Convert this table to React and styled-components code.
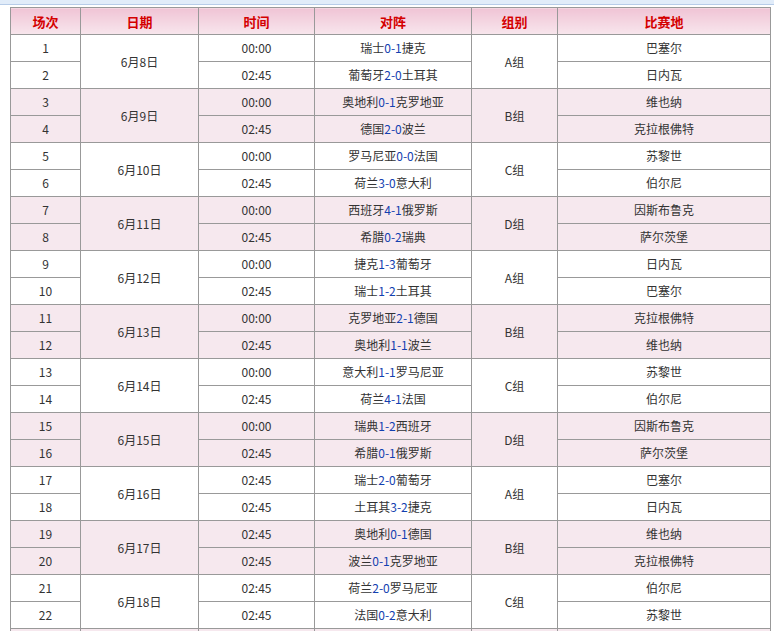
import React from 'react';
import styled, { createGlobalStyle } from 'styled-components';

const GlobalStyle = createGlobalStyle`
    body {
        margin: 0;
        background: #fff;
        font-family: "Noto Sans CJK SC", "DejaVu Sans", sans-serif;
    }
`;

const TopBar = styled.div`
    height: 4px;
    background: #e1ecf9;
    border-bottom: 1px solid #b7cce8;
`;

const Wrapper = styled.div`
    padding: 2px 0 0 10px;
`;

const Table = styled.table`
    border-collapse: collapse;
    border: 1px solid #999;
    table-layout: fixed;
    width: 760px;
    font-size: 12px;
    color: #333;
`;

const Col = styled.col`
    width: ${props => props.w}px;
`;

const HeadCell = styled.th`
    height: 26px;
    padding: 0;
    border: 1px solid #999;
    background: linear-gradient(#f0c4d5, #f8e6ed);
    color: #d40000;
    font-size: 13px;
    font-weight: bold;
    text-align: center;
`;

const Row = styled.tr`
    background: ${props => (props.pink ? '#f6e8ee' : '#fff')};
`;

const Cell = styled.td`
    height: 26px;
    padding: 0;
    border: 1px solid #999;
    text-align: center;
    vertical-align: middle;
    line-height: 14px;
    white-space: nowrap;
    overflow: hidden;
`;

const Score = styled.span`
    color: #1240b0;
`;

const columns = [
    ['场次', 70],
    ['日期', 118],
    ['时间', 116],
    ['对阵', 157],
    ['组别', 86],
    ['比赛地', 213],
];

const days = [
    { date: '6月8日', group: 'A组', games: [
        ['00:00', '瑞士', '0-1', '捷克', '巴塞尔'],
        ['02:45', '葡萄牙', '2-0', '土耳其', '日内瓦'],
    ] },
    { date: '6月9日', group: 'B组', games: [
        ['00:00', '奥地利', '0-1', '克罗地亚', '维也纳'],
        ['02:45', '德国', '2-0', '波兰', '克拉根佛特'],
    ] },
    { date: '6月10日', group: 'C组', games: [
        ['00:00', '罗马尼亚', '0-0', '法国', '苏黎世'],
        ['02:45', '荷兰', '3-0', '意大利', '伯尔尼'],
    ] },
    { date: '6月11日', group: 'D组', games: [
        ['00:00', '西班牙', '4-1', '俄罗斯', '因斯布鲁克'],
        ['02:45', '希腊', '0-2', '瑞典', '萨尔茨堡'],
    ] },
    { date: '6月12日', group: 'A组', games: [
        ['00:00', '捷克', '1-3', '葡萄牙', '日内瓦'],
        ['02:45', '瑞士', '1-2', '土耳其', '巴塞尔'],
    ] },
    { date: '6月13日', group: 'B组', games: [
        ['00:00', '克罗地亚', '2-1', '德国', '克拉根佛特'],
        ['02:45', '奥地利', '1-1', '波兰', '维也纳'],
    ] },
    { date: '6月14日', group: 'C组', games: [
        ['00:00', '意大利', '1-1', '罗马尼亚', '苏黎世'],
        ['02:45', '荷兰', '4-1', '法国', '伯尔尼'],
    ] },
    { date: '6月15日', group: 'D组', games: [
        ['00:00', '瑞典', '1-2', '西班牙', '因斯布鲁克'],
        ['02:45', '希腊', '0-1', '俄罗斯', '萨尔茨堡'],
    ] },
    { date: '6月16日', group: 'A组', games: [
        ['02:45', '瑞士', '2-0', '葡萄牙', '巴塞尔'],
        ['02:45', '土耳其', '3-2', '捷克', '日内瓦'],
    ] },
    { date: '6月17日', group: 'B组', games: [
        ['02:45', '奥地利', '0-1', '德国', '维也纳'],
        ['02:45', '波兰', '0-1', '克罗地亚', '克拉根佛特'],
    ] },
    { date: '6月18日', group: 'C组', games: [
        ['02:45', '荷兰', '2-0', '罗马尼亚', '伯尔尼'],
        ['02:45', '法国', '0-2', '意大利', '苏黎世'],
    ] },
    { date: '6月19日', group: 'D组', games: [
        ['02:45', '希腊', '1-2', '西班牙', '萨尔茨堡'],
        ['02:45', '俄罗斯', '2-0', '瑞典', '因斯布鲁克'],
    ] },
];

const App = () => {
    let no = 0;
    return (
        <>
            <GlobalStyle />
            <TopBar />
            <Wrapper>
                <Table>
                    <colgroup>
                        {columns.map(([title, w]) => (
                            <Col key={title} w={w} />
                        ))}
                    </colgroup>
                    <thead>
                        <tr>
                            {columns.map(([title]) => (
                                <HeadCell key={title}>{title}</HeadCell>
                            ))}
                        </tr>
                    </thead>
                    <tbody>
                        {days.map((day, d) =>
                            day.games.map(([time, home, score, away, venue], i) => {
                                no += 1;
                                return (
                                    <Row key={no} pink={d % 2 === 1}>
                                        <Cell>{no}</Cell>
                                        {i === 0 && <Cell rowSpan={day.games.length}>{day.date}</Cell>}
                                        <Cell>{time}</Cell>
                                        <Cell>{home}<Score>{score}</Score>{away}</Cell>
                                        {i === 0 && <Cell rowSpan={day.games.length}>{day.group}</Cell>}
                                        <Cell>{venue}</Cell>
                                    </Row>
                                );
                            })
                        )}
                    </tbody>
                </Table>
            </Wrapper>
        </>
    );
};

export default App;
